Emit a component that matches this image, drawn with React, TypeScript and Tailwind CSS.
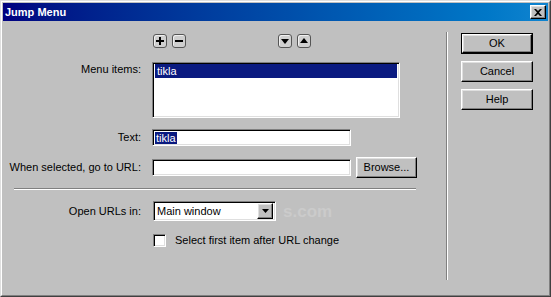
import React from "react";

const raised =
  "border border-t-white border-l-white border-r-black border-b-black shadow-[inset_-1px_-1px_0_#808080,inset_1px_1px_0_#dfdfdf]";
const sunken =
  "border border-t-[#808080] border-l-[#808080] border-r-white border-b-white shadow-[inset_1px_1px_0_#000,inset_-1px_-1px_0_#dfdfdf]";

function MiniBtn({ children }: { children: React.ReactNode }) {
  return (
    <div className="w-[14px] h-[14px] rounded-[3px] border border-[#555] bg-[#cfcfcf] shadow-[inset_1px_1px_0_#f0f0f0] flex items-center justify-center">
      {children}
    </div>
  );
}

function Btn({ label, def }: { label: string; def?: boolean }) {
  return (
    <div
      className={
        def
          ? "w-[72px] h-[21px] border border-black flex"
          : "w-[72px] h-[21px] flex"
      }
    >
      <div className={`flex-1 ${raised} bg-[#c0c0c0] flex items-center justify-center text-[11px] text-black leading-none`}>
        {label}
      </div>
    </div>
  );
}

export default function App() {
  return (
    <div
      className="w-[551px] h-[297px] bg-[#c0c0c0] overflow-hidden text-black"
      style={{ fontFamily: '"Liberation Sans", Arial, sans-serif' }}
    >
      <div className="w-full h-full border border-t-[#dfdfdf] border-l-[#dfdfdf] border-r-[#404040] border-b-[#404040]">
        <div className="w-full h-full border border-t-white border-l-white border-r-[#808080] border-b-[#808080] p-px flex flex-col">
          {/* Title bar */}
          <div className="h-[18px] shrink-0 bg-gradient-to-r from-[#000080] to-[#1084d0] flex items-center pl-[2px] pr-[2px]">
            <span className="text-white font-bold text-[11px] leading-none">Jump Menu</span>
            <div className={`ml-auto w-[16px] h-[14px] ${raised} bg-[#c0c0c0] flex items-center justify-center`}>
              <svg width="8" height="7" viewBox="0 0 8 7">
                <path d="M0 0h2l2 2 2-2h2L5 3.5 8 7H6L4 5 2 7H0l3-3.5z" fill="#000" />
              </svg>
            </div>
          </div>

          {/* Body */}
          <div className="relative flex-1 flex">
            {/* Left panel */}
            <div className="w-[443px] flex flex-col pt-[13px] text-[11px] leading-[13px]">
              {/* row 1 */}
              <div className="flex h-[14px]">
                <div className="w-[149px]" />
                <div className="flex ml-px gap-[5px]">
                  <MiniBtn>
                    <svg width="10" height="10" viewBox="0 0 10 10">
                      <path d="M4 1h2v3h3v2H6v3H4V6H1V4h3z" fill="#000" />
                    </svg>
                  </MiniBtn>
                  <MiniBtn>
                    <svg width="10" height="10" viewBox="0 0 10 10">
                      <path d="M1 4h8v2H1z" fill="#000" />
                    </svg>
                  </MiniBtn>
                </div>
                <div className="flex ml-[92px] gap-[5px]">
                  <MiniBtn>
                    <svg width="10" height="10" viewBox="0 0 10 10">
                      <path d="M1 3h8L5 8z" fill="#000" />
                    </svg>
                  </MiniBtn>
                  <MiniBtn>
                    <svg width="10" height="10" viewBox="0 0 10 10">
                      <path d="M1 7h8L5 2z" fill="#000" />
                    </svg>
                  </MiniBtn>
                </div>
              </div>

              {/* row 2: Menu items */}
              <div className="flex mt-[14px]">
                <div className="w-[138px] text-right pt-[1px]">Menu items:</div>
                <div className={`ml-[11px] w-[248px] h-[56px] bg-white ${sunken} p-[2px] pt-px`}>
                  <div className="h-[14px] bg-[#0a1a80] text-white pl-[2px] leading-[14px]">tikla</div>
                </div>
              </div>

              {/* row 3: Text */}
              <div className="flex items-center mt-[11px]">
                <div className="w-[138px] text-right">Text:</div>
                <div className={`ml-[11px] w-[199px] h-[17px] bg-white ${sunken} flex items-center pl-[2px]`}>
                  <span className="bg-[#0a1a80] text-white leading-[12px] px-px">tikla</span>
                </div>
              </div>

              {/* row 4: URL */}
              <div className="flex items-center mt-[11px] h-[21px]">
                <div className="w-[138px] text-right">When selected, go to URL:</div>
                <div className={`ml-[11px] w-[199px] h-[17px] bg-white ${sunken}`} />
                <div className={`ml-[5px] w-[61px] h-[21px] ${raised} bg-[#c0c0c0] flex items-center justify-center`}>
                  Browse...
                </div>
              </div>

              {/* separator */}
              <div className="mt-[10px] ml-[11px] w-[402px] h-[2px] border-t border-t-[#808080] border-b border-b-white" />

              {/* row 5: Open URLs in */}
              <div className="flex items-center mt-[11px] h-[20px]">
                <div className="w-[138px] text-right">Open URLs in:</div>
                <div className={`ml-[12px] w-[123px] h-[20px] bg-white ${sunken} flex items-center p-[2px]`}>
                  <span className="flex-1 pl-[1px]">Main window</span>
                  <div className={`w-[16px] h-[16px] ${raised} bg-[#c0c0c0] flex items-center justify-center`}>
                    <svg width="7" height="4" viewBox="0 0 7 4">
                      <path d="M0 0h7L3.5 4z" fill="#000" />
                    </svg>
                  </div>
                </div>
              </div>

              {/* row 6: checkbox */}
              <div className="flex items-center mt-[13px] h-[13px]">
                <div className="w-[150px]" />
                <div className={`w-[13px] h-[13px] bg-white ${sunken}`} />
                <span className="ml-[9px]">Select first item after URL change</span>
              </div>
            </div>

            {/* vertical separator */}
            <div className="mt-[11px] mb-[14px] w-[2px] border-l border-l-[#808080] border-r border-r-white" />

            {/* Right panel */}
            <div className="flex flex-col pt-[12px] pl-[13px] gap-[7px]">
              <Btn label="OK" def />
              <Btn label="Cancel" />
              <Btn label="Help" />
            </div>

            {/* faint watermark */}
            <span className="absolute left-[280px] top-[182px] text-[17px] font-bold text-[#cbcbcb] leading-none pointer-events-none">
              s.com
            </span>
          </div>
        </div>
      </div>
    </div>
  );
}
